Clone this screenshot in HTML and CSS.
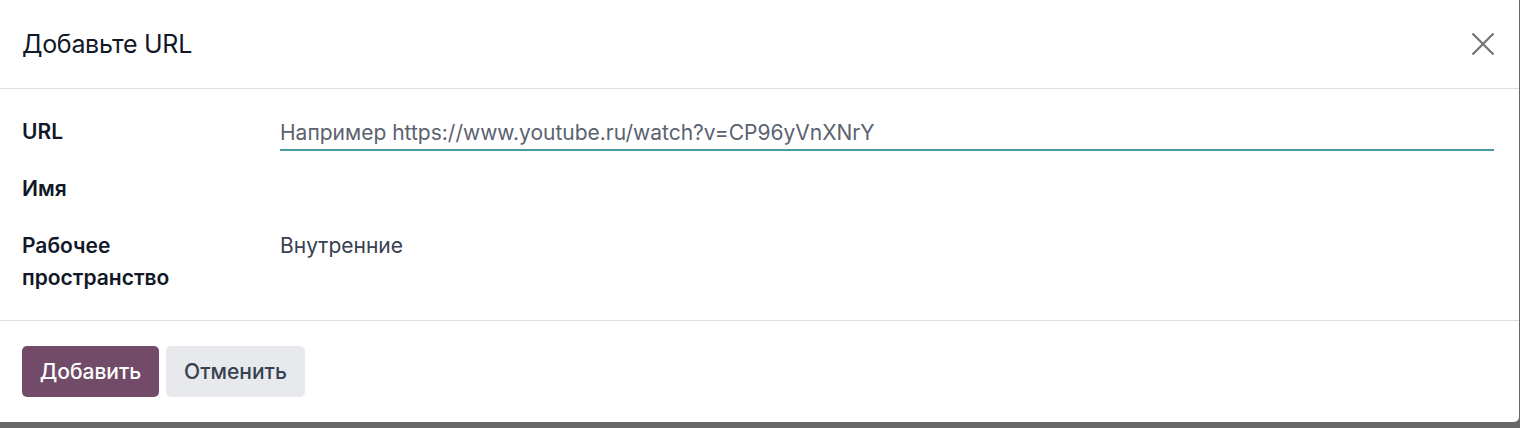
FILE: index.html
```html
<!DOCTYPE html>
<html lang="ru">
<head>
<meta charset="utf-8">
<title>Добавьте URL</title>
<link rel="stylesheet" href="styles.css">
</head>
<body>
<div class="dialog">
  <header class="dlg-header">
    <h4 class="dlg-title">Добавьте URL</h4>
    <button class="dlg-close" aria-label="Закрыть">
      <svg width="24" height="24" viewBox="0 0 24 24"><path d="M1.5 1.5 L22.5 22.5 M22.5 1.5 L1.5 22.5" stroke="#737373" stroke-width="2.2" fill="none"/></svg>
    </button>
  </header>
  <main class="dlg-body">
    <div class="form-grid">
      <label class="lbl">URL</label>
      <div class="field"><input class="inp" type="text" placeholder="Например https://www.youtube.ru/watch?v=CP96yVnXNrY"></div>
      <label class="lbl">Имя</label>
      <div class="field"></div>
      <label class="lbl">Рабочее пространство</label>
      <div class="field value">Внутренние</div>
    </div>
  </main>
  <footer class="dlg-footer">
    <button class="btn btn-primary">Добавить</button>
    <button class="btn btn-secondary">Отменить</button>
  </footer>
</div>
</body>
</html>
```

FILE: styles.css
```css
* { box-sizing: border-box; }
html, body { margin: 0; padding: 0; }
body {
  background: #676767;
  width: 1520px;
  height: 428px;
  overflow: hidden;
  font-family: Inter, "Noto Sans", sans-serif;
  color: #111827;
}
.dialog {
  width: 1519px;
  height: 422px;
  background: #ffffff;
  border-bottom-right-radius: 5px;
  display: flex;
  flex-direction: column;
}
.dlg-header {
  height: 89px;
  border-bottom: 1px solid #dcdde1;
  display: flex;
  align-items: center;
  justify-content: space-between;
  padding: 0 24px 0 22px;
}
.dlg-title {
  margin: 0;
  font-size: 25px;
  font-weight: 400;
  color: #111827;
  letter-spacing: -0.3px;
}
.dlg-close {
  border: 0;
  background: none;
  padding: 0;
  width: 24px;
  height: 24px;
  cursor: pointer;
  display: flex;
}
.dlg-body {
  padding: 27px 25px 0 22px;
  height: 232px;
  border-bottom: 1px solid #dcdde1;
}
.form-grid {
  display: grid;
  grid-template-columns: 258px 1fr;
  row-gap: 22px;
  font-size: 21px;
  line-height: 32px;
}
.lbl {
  font-weight: 600;
  color: #111827;
  padding-right: 40px;
  min-height: 35px;
}
.field {
  min-height: 35px;
}
.inp {
  display: block;
  width: 100%;
  border: 0;
  border-bottom: 2px solid #4a9ca1;
  font: inherit;
  font-size: 21px;
  line-height: 32px;
  height: 35px;
  padding: 0;
  outline: none;
  color: #374151;
  background: transparent;
}
.inp::placeholder { color: #5b6270; opacity: 1; }
.value { color: #374151; }
.dlg-footer {
  flex: 1;
  display: flex;
  align-items: flex-start;
  gap: 7px;
  padding: 25px 22px 0;
}
.btn {
  height: 51px;
  border: 0;
  border-radius: 5px;
  font-family: inherit;
  font-size: 21px;
  font-weight: 500;
  padding: 0 14px;
  cursor: pointer;
}
.btn-primary {
  background: #714b67;
  color: #ffffff;
  width: 137px;
}
.btn-secondary {
  background: #e7e9ed;
  color: #374151;
  width: 139px;
}
```
